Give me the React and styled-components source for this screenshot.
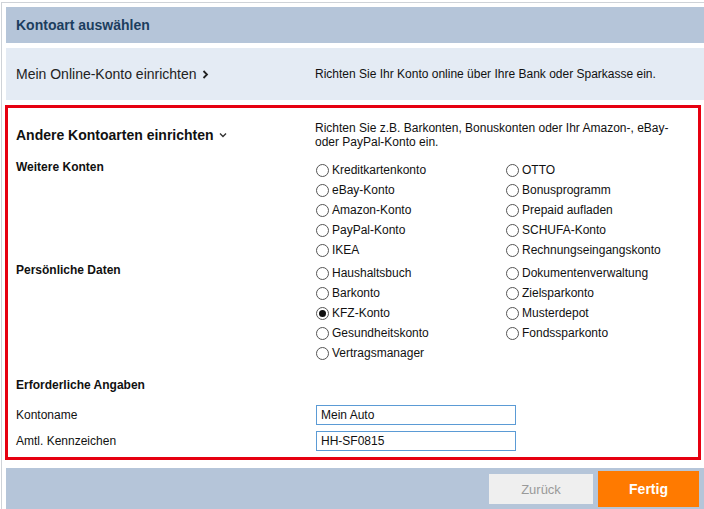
import React from 'react'
import styled, { createGlobalStyle } from 'styled-components';

const GlobalStyle = createGlobalStyle`
    html, body {
        margin: 0;
        padding: 0;
        overflow: hidden;
        background: #fff;
        font-family: "Liberation Sans", Arial, sans-serif;
        color: #000;
    }
`;

const weitereKonten = [
    'Kreditkartenkonto', 'OTTO',
    'eBay-Konto', 'Bonusprogramm',
    'Amazon-Konto', 'Prepaid aufladen',
    'PayPal-Konto', 'SCHUFA-Konto',
    'IKEA', 'Rechnungseingangskonto',
];

const persoenlicheDaten = [
    'Haushaltsbuch', 'Dokumentenverwaltung',
    'Barkonto', 'Zielsparkonto',
    'KFZ-Konto', 'Musterdepot',
    'Gesundheitskonto', 'Fondssparkonto',
    'Vertragsmanager',
];

function ChevronRight() {
    return (
        <svg width="7" height="9" viewBox="0 0 7 9">
            <path d="M1.5 1 L5 4.5 L1.5 8" fill="none" stroke="#222" strokeWidth="1.8" />
        </svg>
    )
}

function ChevronDown() {
    return (
        <svg width="8" height="6" viewBox="0 0 8 6">
            <path d="M1 1.5 L4 4.5 L7 1.5" fill="none" stroke="#333" strokeWidth="1.4" />
        </svg>
    )
}

function RadioGroup({ items, selected }) {
    return (
        <RadioGrid>
            {items.map((item) => (
                <RadioItem key={item}>
                    <RadioCircle $checked={item === selected} />
                    <span>{item}</span>
                </RadioItem>
            ))}
        </RadioGrid>
    )
}

function App() {
    return (
        <Page>
            <GlobalStyle />
            <Header>Kontoart auswählen</Header>
            <OnlineRow>
                <OnlineTitle>Mein Online-Konto einrichten <ChevronRight /></OnlineTitle>
                <Description>Richten Sie Ihr Konto online über Ihre Bank oder Sparkasse ein.</Description>
            </OnlineRow>
            <HighlightBox>
                <FormGrid>
                    <SectionTitle>Andere Kontoarten einrichten <ChevronDown /></SectionTitle>
                    <IntroText>
                        Richten Sie z.B. Barkonten, Bonuskonten oder Ihr Amazon-, eBay-<br />
                        oder PayPal-Konto ein.
                    </IntroText>

                    <GroupLabel $top={11}>Weitere Konten</GroupLabel>
                    <GroupBody $top={11}>
                        <RadioGroup items={weitereKonten} />
                    </GroupBody>

                    <GroupLabel $top={3}>Persönliche Daten</GroupLabel>
                    <GroupBody $top={3}>
                        <RadioGroup items={persoenlicheDaten} selected="KFZ-Konto" />
                    </GroupBody>

                    <GroupLabel $top={15}>Erforderliche Angaben</GroupLabel>
                    <GroupBody $top={15} />

                    <FieldLabel $top={13}>Kontoname</FieldLabel>
                    <GroupBody $top={13}>
                        <TextInput defaultValue="Mein Auto" />
                    </GroupBody>

                    <FieldLabel $top={6}>Amtl. Kennzeichen</FieldLabel>
                    <GroupBody $top={6}>
                        <TextInput defaultValue="HH-SF0815" />
                    </GroupBody>
                </FormGrid>
            </HighlightBox>
            <Footer>
                <BackButton>Zurück</BackButton>
                <DoneButton>Fertig</DoneButton>
            </Footer>
        </Page>
    )
}

const Page = styled.div`
    margin: 2px 0 0 1px;
    width: 720px;
    border-top: 1px solid #cfd3d8;
    border-left: 1px solid #cfd3d8;
    padding: 4px 0 0 4px;
    display: flex;
    flex-direction: column;
    gap: 5px;
`;

const Header = styled.div`
    width: 698px;
    height: 36px;
    box-sizing: border-box;
    background: #b5c5d9;
    color: #1c3e5e;
    font-size: 14px;
    font-weight: bold;
    display: flex;
    align-items: center;
    padding-left: 10px;
`;

const OnlineRow = styled.div`
    width: 698px;
    height: 52px;
    box-sizing: border-box;
    background: #e4ebf4;
    display: grid;
    grid-template-columns: 299px 1fr;
    align-items: center;
    padding-left: 10px;
`;

const OnlineTitle = styled.div`
    font-size: 14px;
    color: #222;
    display: flex;
    align-items: center;
    gap: 5px;
`;

const Description = styled.div`
    font-size: 12px;
    line-height: 14px;
    color: #111;
`;

const HighlightBox = styled.div`
    width: 696px;
    box-sizing: border-box;
    margin-left: -1px;
    border: 3px solid #e60010;
    padding: 13px 0 6px 8px;
`;

const FormGrid = styled.div`
    display: grid;
    grid-template-columns: 299px 1fr;
    align-items: start;
`;

const SectionTitle = styled.div`
    align-self: center;
    font-size: 14px;
    font-weight: bold;
    color: #111;
    display: flex;
    align-items: center;
    gap: 5px;
`;

const IntroText = styled(Description)``;

const GroupLabel = styled.div`
    margin-top: ${(p) => p.$top}px;
    font-size: 12px;
    line-height: 14px;
    font-weight: bold;
    color: #111;
`;

const FieldLabel = styled.div`
    margin-top: ${(p) => p.$top}px;
    font-size: 12px;
    line-height: 20px;
    color: #111;
`;

const GroupBody = styled.div`
    margin-top: ${(p) => p.$top}px;
    min-height: 14px;
`;

const RadioGrid = styled.div`
    display: grid;
    grid-template-columns: 190px 190px;
    grid-auto-rows: 20px;
`;

const RadioItem = styled.label`
    display: flex;
    align-items: center;
    gap: 3px;
    padding-left: 1px;
    font-size: 12px;
    color: #111;
`;

const RadioCircle = styled.span`
    width: 13px;
    height: 13px;
    box-sizing: border-box;
    border: 1px solid #555;
    border-radius: 50%;
    background: #fff;
    display: flex;
    align-items: center;
    justify-content: center;
    &::after {
        content: '';
        width: 7px;
        height: 7px;
        border-radius: 50%;
        background: ${(p) => (p.$checked ? '#111' : 'transparent')};
    }
`;

const TextInput = styled.input`
    width: 200px;
    height: 20px;
    box-sizing: border-box;
    margin-left: 1px;
    border: 1px solid #5b9bd5;
    padding: 0 4px;
    font-family: "Liberation Sans", Arial, sans-serif;
    font-size: 12px;
    color: #111;
    outline: none;
`;

const Footer = styled.div`
    margin-top: 3px;
    width: 698px;
    height: 42px;
    box-sizing: border-box;
    background: #b5c5d9;
    display: flex;
    justify-content: flex-end;
    align-items: center;
    gap: 5px;
    padding-right: 5px;
`;

const BackButton = styled.button`
    width: 104px;
    height: 30px;
    border: none;
    background: #efefef;
    color: #9a9a9a;
    font-family: "Liberation Sans", Arial, sans-serif;
    font-size: 13px;
`;

const DoneButton = styled.button`
    width: 101px;
    height: 36px;
    border: none;
    background: #ff7a00;
    color: #fff;
    font-family: "Liberation Sans", Arial, sans-serif;
    font-size: 14px;
    font-weight: bold;
`;

export default App
